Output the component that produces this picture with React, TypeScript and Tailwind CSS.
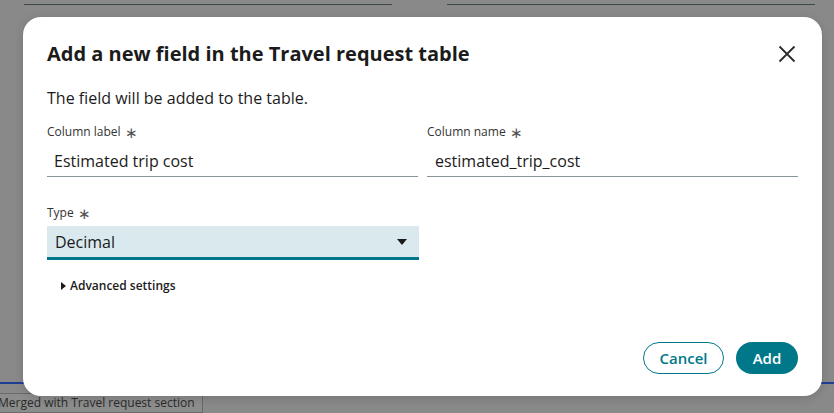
import React from "react";

export default function App() {
  return (
    <div
      className="relative w-[834px] h-[413px] overflow-hidden bg-[#898989]"
      style={{ fontFamily: '"Open Sans", "Noto Sans", sans-serif' }}
    >
      {/* background page */}
      <div className="flex h-full flex-col">
        <div className="mt-[4px] flex gap-[55px] pl-[24px]">
          <div className="h-[1px] w-[368px] bg-[#3d4a4a]" />
          <div className="h-[1px] w-[368px] bg-[#3d4a4a]" />
        </div>
        <div className="flex-1" />
        <div className="h-[2px] w-full bg-[#1f3f94]" />
        <div className="h-[9px]" />
        <div className="-ml-[3px] flex h-[20px] w-[206px] items-center border border-[#6a6a6a] bg-[#8c8c8c] text-[12px] leading-none text-[#2a2a2a]">
          <span className="whitespace-nowrap">Merged with Travel request section</span>
        </div>
      </div>

      {/* modal */}
      <div className="absolute left-[23px] top-[17px] flex h-[379px] w-[799px] flex-col rounded-[18px] bg-white px-[24px] pt-[24px] shadow-[0_2px_10px_rgba(0,0,0,0.15)]">
        <div className="flex items-center justify-between">
          <h2 className="text-[20px] font-bold leading-[26px] text-[#1b1b1b]">
            Add a new field in the Travel request table
          </h2>
          <button className="mr-[-2px] flex h-[26px] w-[26px] items-center justify-center text-[#2b2b2b]">
            <svg width="18" height="18" viewBox="0 0 18 18" fill="none" stroke="currentColor" strokeWidth="1.8">
              <path d="M1.5 1.5 L16.5 16.5 M16.5 1.5 L1.5 16.5" />
            </svg>
          </button>
        </div>
        <p className="mt-[20px] text-[16px] leading-[22px] text-[#1b1b1b]">
          The field will be added to the table.
        </p>

        <div className="mt-[15px] grid grid-cols-2 gap-[9px]">
          <div className="flex flex-col">
            <label className="flex items-center text-[12px] leading-[16px] text-[#333]">
              Column label <span className="ml-[4px] text-[15px] font-light leading-none text-[#555]">∗</span>
            </label>
            <div className="mt-[5px] flex h-[32px] items-center border-b border-[#8a9599] pl-[7px] text-[16px] text-[#1b1b1b]">
              Estimated trip cost
            </div>
          </div>
          <div className="flex flex-col">
            <label className="flex items-center text-[12px] leading-[16px] text-[#333]">
              Column name <span className="ml-[4px] text-[15px] font-light leading-none text-[#555]">∗</span>
            </label>
            <div className="mt-[5px] flex h-[32px] items-center border-b border-[#8a9599] pl-[8px] text-[16px] text-[#1b1b1b]">
              estimated_trip_cost
            </div>
          </div>
        </div>

        <div className="mt-[28px] flex w-[372px] flex-col">
          <label className="flex items-center text-[12px] leading-[16px] text-[#333]">
            Type <span className="ml-[4px] text-[15px] font-light leading-none text-[#555]">∗</span>
          </label>
          <div className="mt-[5px] flex h-[34px] items-center justify-between border-b-[3px] border-[#00788a] bg-[#d9e9ee] pl-[8px] pr-[12px] text-[16px] text-[#1b1b1b]">
            <span>Decimal</span>
            <svg width="10" height="6" viewBox="0 0 10 6">
              <path d="M0 0 H10 L5 6 Z" fill="#1b1b1b" />
            </svg>
          </div>
        </div>

        <div className="mt-[17px] flex items-center pl-[14px] text-[12px] font-semibold text-[#1b1b1b]">
          <svg width="5" height="8" viewBox="0 0 5 8" className="mr-[4px]">
            <path d="M0 0 L5 4 L0 8 Z" fill="#1b1b1b" />
          </svg>
          Advanced settings
        </div>

        <div className="flex-1" />
        <div className="mb-[22px] flex justify-end gap-[12px]">
          <button className="flex h-[32px] w-[81px] items-center justify-center rounded-full border border-[#00788a] text-[15px] font-semibold text-[#00788a]">
            Cancel
          </button>
          <button className="flex h-[32px] w-[62px] items-center justify-center rounded-full bg-[#00788a] text-[15px] font-semibold text-white">
            Add
          </button>
        </div>
      </div>
    </div>
  );
}
